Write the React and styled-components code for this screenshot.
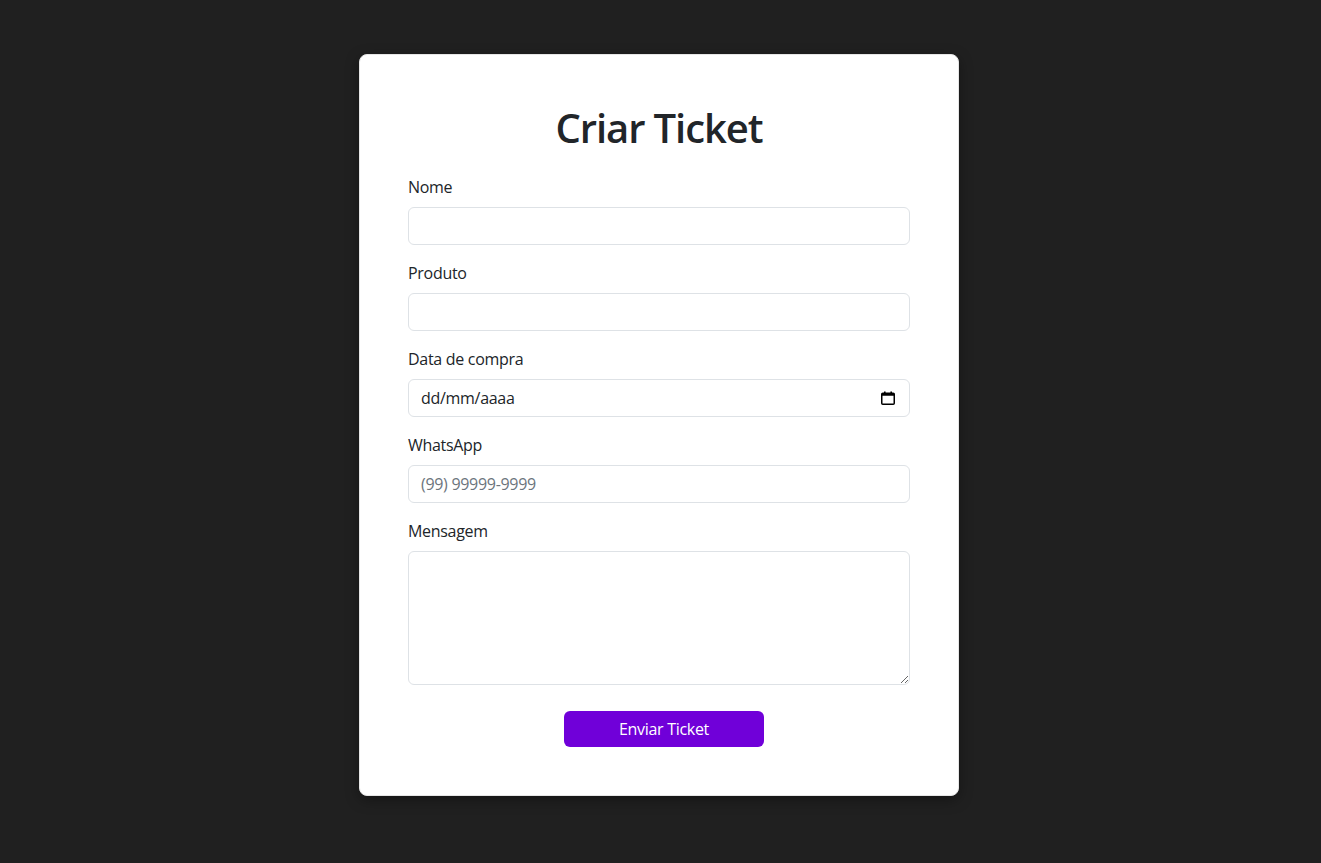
import React from "react";
import styled, { createGlobalStyle } from "styled-components";

const GlobalStyle = createGlobalStyle`
  * { box-sizing: border-box; }
  html, body { margin: 0; padding: 0; background: #202020; }
  body {
    font-family: "Segoe UI", "Open Sans", "Noto Sans", sans-serif;
    color: #212529;
  }
`;

const Page = styled.div`
  min-height: 863px;
  background: #202020;
  display: flex;
  justify-content: center;
  align-items: flex-start;
  padding-top: 54px;
  padding-right: 3px;
`;

const Card = styled.form`
  width: 600px;
  background: #ffffff;
  border: 1px solid #e6e6e6;
  border-radius: 8px;
  padding: 48px;
  box-shadow: 0 4px 14px rgba(0, 0, 0, 0.35);
  display: flex;
  flex-direction: column;
`;

const Title = styled.h1`
  margin: 1px 0 23px;
  font-size: 40px;
  line-height: 48px;
  font-weight: 600;
  text-align: center;
  color: #212529;
  letter-spacing: -1.1px;
`;

const Field = styled.div`
  display: flex;
  flex-direction: column;
  margin-bottom: 16px;
`;

const Label = styled.label`
  font-size: 16px;
  line-height: 24px;
  margin-bottom: 8px;
  color: #212529;
  letter-spacing: -0.3px;
`;

const controlStyles = `
  width: 100%;
  font-family: "Segoe UI", "Open Sans", "Noto Sans", sans-serif;
  font-size: 16px;
  line-height: 24px;
  color: #212529;
  background: #fff;
  border: 1px solid #dee2e6;
  border-radius: 6px;
  padding: 6px 12px;
  outline: none;
  letter-spacing: -0.3px;
`;

const Input = styled.input`
  ${controlStyles}
  height: 38px;
  &::placeholder { color: ${(p) => (p.$dark ? "#212529" : "#6c757d")}; opacity: 1; }
`;

const DateWrap = styled.div`
  position: relative;
  width: 100%;
`;

const CalendarIcon = styled.svg`
  position: absolute;
  right: 15px;
  top: 12px;
  width: 14px;
  height: 14px;
  pointer-events: none;
`;

const TextArea = styled.textarea`
  ${controlStyles}
  height: 134px;
  resize: vertical;
  display: block;
`;

const ButtonRow = styled.div`
  display: flex;
  justify-content: center;
  padding-left: 10px;
  margin-top: 10px;
`;

const Button = styled.button`
  width: 200px;
  height: 36px;
  border: none;
  border-radius: 6px;
  background: #7000d9;
  color: #fff;
  font-family: "Segoe UI", "Open Sans", "Noto Sans", sans-serif;
  font-size: 16px;
  line-height: 24px;
  letter-spacing: -0.3px;
  cursor: pointer;
`;

export default function App() {
  return (
    <>
      <GlobalStyle />
      <Page>
        <Card onSubmit={(e) => e.preventDefault()}>
          <Title>Criar Ticket</Title>
          <Field>
            <Label htmlFor="nome">Nome</Label>
            <Input id="nome" type="text" />
          </Field>
          <Field>
            <Label htmlFor="produto">Produto</Label>
            <Input id="produto" type="text" />
          </Field>
          <Field>
            <Label htmlFor="data">Data de compra</Label>
            <DateWrap>
              <Input id="data" type="text" placeholder="dd/mm/aaaa" $dark />
              <CalendarIcon viewBox="0 0 14 14" aria-hidden="true">
                <rect x="0.75" y="2.25" width="12.5" height="11" rx="1" fill="none" stroke="#000" strokeWidth="1.5" />
                <rect x="0.75" y="2.25" width="12.5" height="2.5" fill="#000" />
                <rect x="3" y="0.5" width="1.6" height="2.5" fill="#000" />
                <rect x="9.4" y="0.5" width="1.6" height="2.5" fill="#000" />
              </CalendarIcon>
            </DateWrap>
          </Field>
          <Field>
            <Label htmlFor="whats">WhatsApp</Label>
            <Input id="whats" type="text" placeholder="(99) 99999-9999" />
          </Field>
          <Field>
            <Label htmlFor="msg">Mensagem</Label>
            <TextArea id="msg" rows={5} />
          </Field>
          <ButtonRow>
            <Button type="submit">Enviar Ticket</Button>
          </ButtonRow>
        </Card>
      </Page>
    </>
  );
}
